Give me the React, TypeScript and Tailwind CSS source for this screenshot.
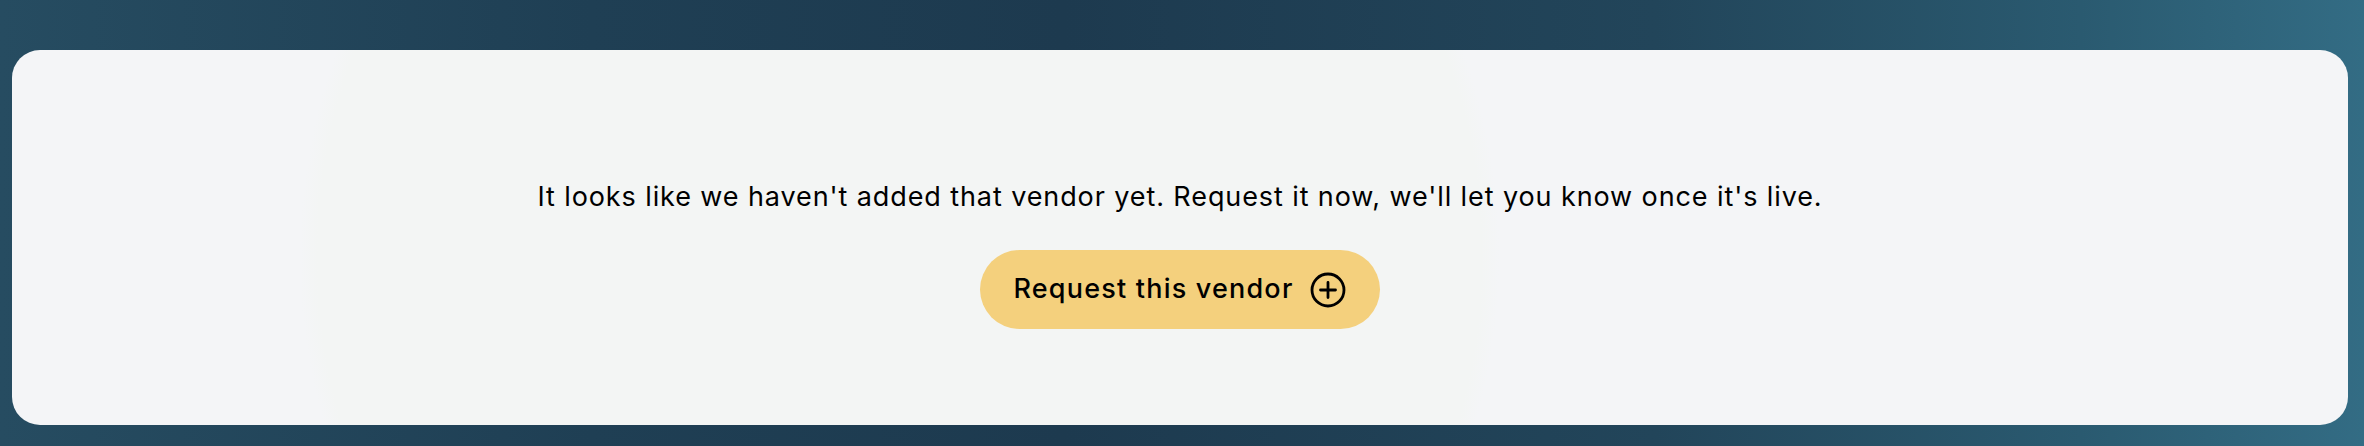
const PlusCircle = () => (
    <svg width="36" height="36" viewBox="0 0 36 36" fill="none" stroke="#000" strokeWidth="2.8" strokeLinecap="round">
        <circle cx="18" cy="18" r="16" />
        <path d="M18 10.5v15M10.5 18h15" />
    </svg>
)

const App = () => {
    return (
        <div className="h-[446px] w-full bg-[linear-gradient(90deg,#264c61_0%,#1f3f54_25%,#1d3a4f_45%,#22455a_70%,#2a5a70_88%,#336c84_100%)] pt-[50px] pl-[12px] pr-[16px] pb-[21px] font-['Inter',sans-serif]">
            <div className="h-full rounded-[28px] bg-[#f4f5f7] bg-[radial-gradient(600px_circle_at_38%_55%,#f3f5f4_0%,#f3f5f4_97%,transparent_100%)] flex flex-col items-center pt-[127px]">
                <p className="text-[27px] leading-[40px] text-black tracking-[0.9px]">
                    It looks like we haven't added that vendor yet. Request it now, we'll let you know once it's live.
                </p>
                <button className="mt-[33px] h-[79px] rounded-full bg-[#f4d07d] pl-[33px] pr-[34px] flex items-center gap-[16px] text-[27px] font-medium text-black tracking-[1.2px]">
                    <span>Request this vendor</span>
                    <PlusCircle />
                </button>
            </div>
        </div>
    )
}

export default App
